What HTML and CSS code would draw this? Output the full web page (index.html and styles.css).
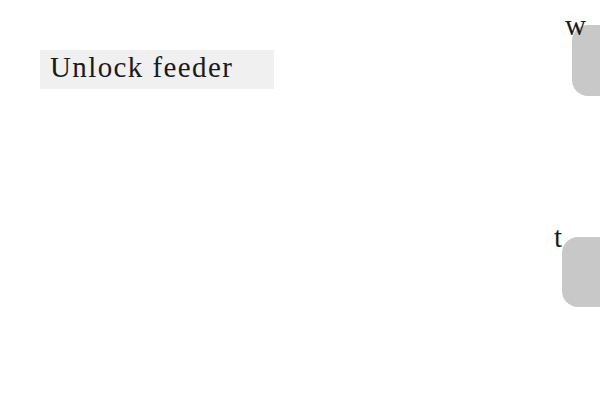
FILE: index.html
```html
<!DOCTYPE html>
<html>
<head>
<meta charset="utf-8">
<link rel="stylesheet" href="styles.css">
</head>
<body>
<div class="page">
  <div class="btn">Unlock feeder</div>
  <div class="pill pill-top"></div>
  <span class="lbl lbl-w">w</span>
  <div class="pill pill-bot"></div>
  <span class="lbl lbl-t">t</span>
</div>
</body>
</html>
```
FILE: styles.css
```css
html, body { margin: 0; padding: 0; background: #ffffff; }
.page { position: relative; width: 600px; height: 400px; overflow: hidden; font-family: "Liberation Serif", "DejaVu Serif", serif; color: #1a1a1a; }
.btn { position: absolute; left: 40px; top: 50px; width: 224px; height: 35px; padding: 0 0 4px 10px; background: #f0f0f0; font-size: 29px; line-height: 35px; letter-spacing: 1.4px; white-space: nowrap; }
.lbl { position: absolute; font-size: 29px; line-height: 29px; }
.lbl-w { left: 565px; top: 11px; }
.lbl-t { left: 554px; top: 223px; }
.pill { position: absolute; background: #c8c8c8; border-radius: 16px; }
.pill-top { left: 572px; top: 25px; width: 60px; height: 71px; }
.pill-bot { left: 562px; top: 237px; width: 60px; height: 70px; }
```
